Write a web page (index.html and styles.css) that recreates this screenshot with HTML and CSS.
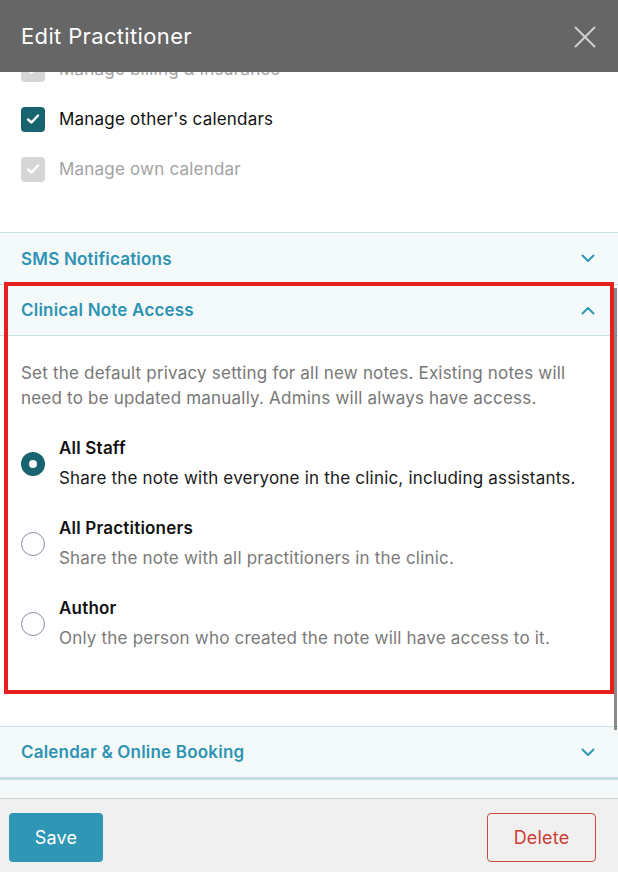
FILE: index.html
```html
<!DOCTYPE html>
<html lang="en">
<head>
<meta charset="utf-8">
<title>Edit Practitioner</title>
<link rel="stylesheet" href="styles.css">
</head>
<body>
<div class="modal">
  <div class="modal-header">
    <h1 class="modal-title">Edit Practitioner</h1>
    <svg class="close-icon" width="22" height="22" viewBox="0 0 22 22"><path d="M1 1 L21 21 M21 1 L1 21" stroke="#d0d0d0" stroke-width="2" fill="none"/></svg>
  </div>
  <div class="modal-body">
    <div class="scroll-inner">
      <div class="perm-list">
        <div class="perm-row disabled">
          <span class="checkbox checked-disabled"><svg width="14" height="12" viewBox="0 0 14 12"><path d="M2 6.5 L5.5 9.5 L12 2.5" stroke="#fff" stroke-width="2.4" fill="none" stroke-linecap="round" stroke-linejoin="round"/></svg></span>
          <span class="perm-label">Manage billing &amp; insurance</span>
        </div>
        <div class="perm-row">
          <span class="checkbox checked"><svg width="14" height="12" viewBox="0 0 14 12"><path d="M2 6.5 L5.5 9.5 L12 2.5" stroke="#fff" stroke-width="2.4" fill="none" stroke-linecap="round" stroke-linejoin="round"/></svg></span>
          <span class="perm-label">Manage other's calendars</span>
        </div>
        <div class="perm-row disabled">
          <span class="checkbox checked-disabled"><svg width="14" height="12" viewBox="0 0 14 12"><path d="M2 6.5 L5.5 9.5 L12 2.5" stroke="#fff" stroke-width="2.4" fill="none" stroke-linecap="round" stroke-linejoin="round"/></svg></span>
          <span class="perm-label">Manage own calendar</span>
        </div>
      </div>

      <div class="section">
        <div class="section-head">
          <span class="section-title">SMS Notifications</span>
          <svg class="chev" width="14" height="9" viewBox="0 0 14 9"><path d="M1.5 1.5 L7 7 L12.5 1.5" stroke="#2f96b4" stroke-width="2" fill="none" stroke-linecap="round" stroke-linejoin="round"/></svg>
        </div>
      </div>

      <div class="section open">
        <div class="section-head">
          <span class="section-title">Clinical Note Access</span>
          <svg class="chev" width="14" height="9" viewBox="0 0 14 9"><path d="M1.5 7.5 L7 2 L12.5 7.5" stroke="#2f96b4" stroke-width="2" fill="none" stroke-linecap="round" stroke-linejoin="round"/></svg>
        </div>
        <div class="section-content">
          <p class="intro">Set the default privacy setting for all new notes. Existing notes will need to be updated manually. Admins will always have access.</p>
          <div class="options">
            <div class="option">
              <span class="radio selected"></span>
              <div class="option-text">
                <div class="option-title">All Staff</div>
                <div class="option-desc dark">Share the note with everyone in the clinic, including assistants.</div>
              </div>
            </div>
            <div class="option">
              <span class="radio"></span>
              <div class="option-text">
                <div class="option-title">All Practitioners</div>
                <div class="option-desc">Share the note with all practitioners in the clinic.</div>
              </div>
            </div>
            <div class="option">
              <span class="radio"></span>
              <div class="option-text">
                <div class="option-title">Author</div>
                <div class="option-desc">Only the person who created the note will have access to it.</div>
              </div>
            </div>
          </div>
        </div>
      </div>

      <div class="section">
        <div class="section-head thick">
          <span class="section-title">Calendar &amp; Online Booking</span>
          <svg class="chev" width="14" height="9" viewBox="0 0 14 9"><path d="M1.5 1.5 L7 7 L12.5 1.5" stroke="#2f96b4" stroke-width="2" fill="none" stroke-linecap="round" stroke-linejoin="round"/></svg>
        </div>
      </div>
      <div class="section">
        <div class="section-head">
          <span class="section-title">Services offered by this practitioner</span>
        </div>
      </div>
    </div>
    <div class="highlight"></div>
    <div class="scrollbar"></div>
  </div>
  <div class="modal-footer">
    <button class="btn btn-save">Save</button>
    <button class="btn btn-delete">Delete</button>
  </div>
</div>
</body>
</html>
```

FILE: styles.css
```css
* { box-sizing: border-box; }
html, body { margin: 0; padding: 0; }
body {
  font-family: Inter, "Noto Sans", sans-serif;
  background: #fff;
  color: #111;
  letter-spacing: 0.2px;
}
.modal {
  width: 618px;
  height: 872px;
  display: flex;
  flex-direction: column;
  overflow: hidden;
}
.modal-header {
  height: 72px;
  flex: 0 0 72px;
  background: #666666;
  display: flex;
  align-items: center;
  justify-content: space-between;
  padding: 0 22px 0 21px;
  position: relative;
  z-index: 2;
}
.modal-title {
  margin: 0;
  color: #fff;
  font-size: 22px;
  font-weight: 400;
  letter-spacing: 0.35px;
}
.close-icon { display: block; margin-top: 1px; }
.modal-body {
  flex: 1;
  position: relative;
  overflow: hidden;
}
.scroll-inner {
  margin-top: -28px;
}
.perm-list {
  padding: 0 21px 38px;
}
.perm-row {
  height: 50px;
  display: flex;
  align-items: center;
  gap: 14px;
}
.checkbox {
  width: 24px;
  height: 25px;
  border-radius: 4px;
  display: flex;
  align-items: center;
  justify-content: center;
}
.checkbox.checked { background: #17646e; }
.checkbox.checked-disabled { background: #d6d6d6; }
.perm-label { font-size: 17px; color: #111; }
.perm-row.disabled .perm-label { color: #a3a3a3; }

.section-head {
  height: 52px;
  background: #f4f9fa;
  border-top: 1px solid #c8e0e6;
  display: flex;
  align-items: center;
  justify-content: space-between;
  padding: 0 23px 0 21px;
}
.section-head.thick { border-bottom: 2px solid #c3dce5; height: 53px; }
.section.open .section-head { border-bottom: 1px solid #c8e0e6; height: 52px; }
.section-title {
  color: #2e93b2;
  font-size: 17px;
  font-weight: 600;
}
.chev { display: block; }
.section-content {
  padding: 25px 21px 75px;
}
.intro {
  margin: 0 0 25px;
  color: #777;
  font-size: 17px;
  line-height: 25px;
}
.options {
  display: flex;
  flex-direction: column;
  gap: 25px;
}
.option {
  display: flex;
  align-items: center;
  gap: 14px;
}
.radio {
  flex: 0 0 24px;
  width: 24px;
  height: 24px;
  border-radius: 50%;
  border: 1px solid #8a8ea0;
  background: #fff;
}
.radio.selected {
  border: 8px solid #17646e;
  background: #fff;
}
.option-text { display: flex; flex-direction: column; gap: 5px; }
.option-title {
  font-size: 17px;
  font-weight: 600;
  line-height: 25px;
  color: #111;
}
.option-desc {
  font-size: 17px;
  line-height: 25px;
  color: #7a7a7a;
}
.option-desc.dark { color: #1a1a1a; }

.highlight {
  position: absolute;
  left: 4px;
  top: 210px;
  width: 610px;
  height: 412px;
  border: 4px solid #e5201f;
  pointer-events: none;
}
.scrollbar {
  position: absolute;
  right: 1px;
  top: 216px;
  width: 3px;
  height: 442px;
  background: #8a8a8a;
}

.modal-footer {
  flex: 0 0 74px;
  height: 74px;
  background: #f0f0f0;
  border-top: 1px solid #cfcfcf;
  display: flex;
  align-items: flex-start;
  justify-content: space-between;
  padding: 14px 22px 0 9px;
  position: relative;
  z-index: 2;
}
.btn {
  height: 49px;
  border-radius: 4px;
  font-family: Inter, "Noto Sans", sans-serif;
  font-size: 18px;
  letter-spacing: 0.2px;
  cursor: pointer;
}
.btn-save {
  width: 94px;
  background: #3096b6;
  color: #fff;
  border: none;
}
.btn-delete {
  width: 109px;
  background: transparent;
  color: #cc3e34;
  border: 1px solid #cf4a3e;
}
```
